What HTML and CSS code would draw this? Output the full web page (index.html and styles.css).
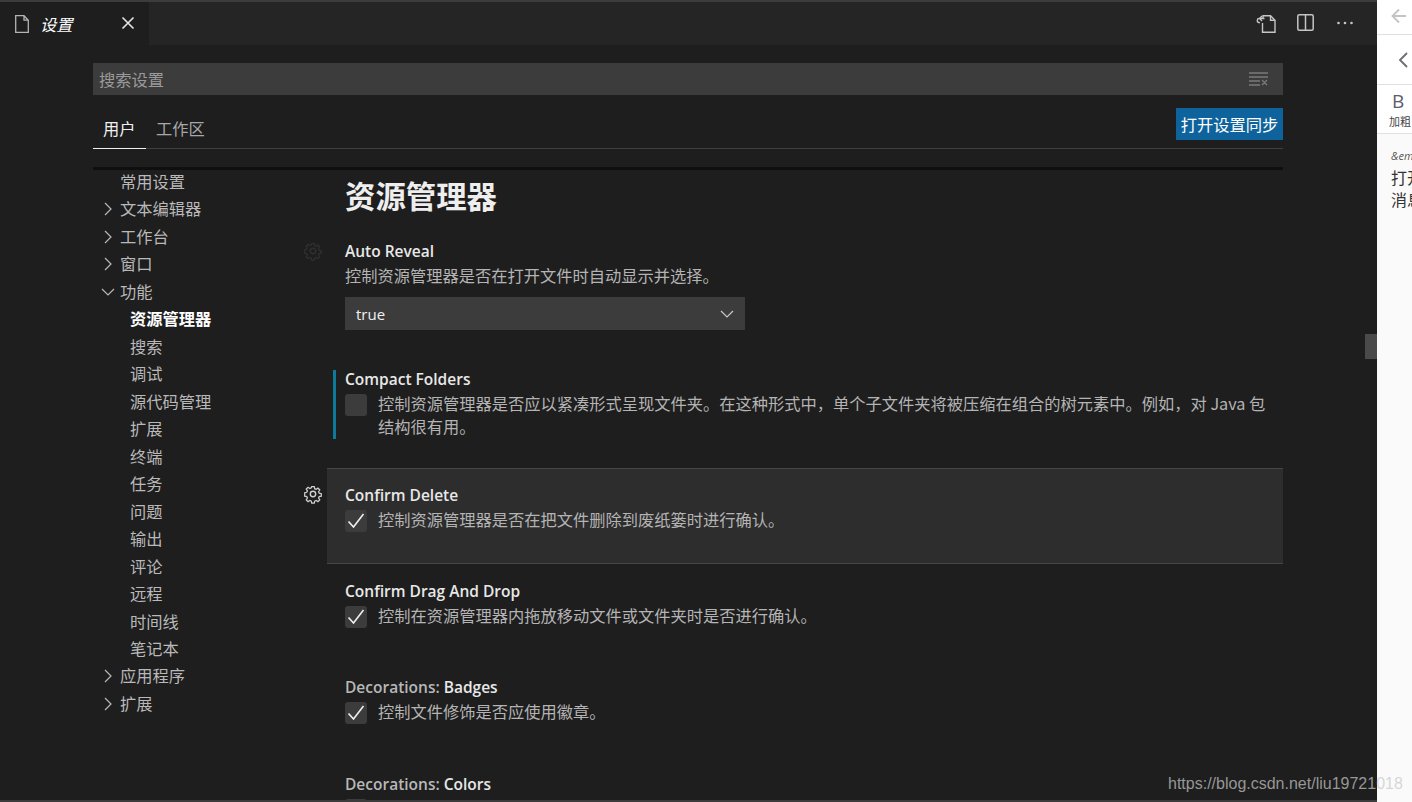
FILE: index.html
```html
<!DOCTYPE html>
<html lang="zh-CN">
<head>
<meta charset="utf-8">
<title>设置</title>
<link rel="stylesheet" href="styles.css">
</head>
<body>
<div class="app">
  <main class="editor">
    <header class="tabbar">
      <div class="tab">
        <svg class="file-icon" viewBox="0 0 14 18" width="14" height="18"><path d="M.7.7h8.300l4.300 4.500v12.100H.7z M9 .7v4.500h4.300" fill="none" stroke="#b4b4b4" stroke-width="1.300"/></svg>
        <span class="tab-title">设置</span>
        <svg class="close-icon" viewBox="0 0 14 14" width="14" height="14"><path d="M1.500 1.500l11 11M12.500 1.500l-11 11" stroke="#e6e6e6" stroke-width="1.600" fill="none"/></svg>
      </div>
      <div class="tab-actions">
        <svg class="act-open" viewBox="0 0 20 18" width="20" height="18"><path d="M7 3V.7h7.500l4.500 4.500v12.100H6.500V8" fill="none" stroke="#c5c5c5" stroke-width="1.400"/><path d="M14.500.7v4.500H19" fill="none" stroke="#c5c5c5" stroke-width="1.400"/><path d="M8.500 3.500H3.500a2 2 0 0 0 -.5 4l1 .5M6 1L3.500 3.500 6 6" fill="none" stroke="#c5c5c5" stroke-width="1.300"/></svg>
        <svg viewBox="0 0 17 17" width="17" height="17"><rect x=".8" y=".8" width="15.400" height="15.400" rx="1.500" fill="none" stroke="#c5c5c5" stroke-width="1.500"/><path d="M8.500 1v15" stroke="#c5c5c5" stroke-width="1.500"/></svg>
        <svg class="act-more" viewBox="0 0 16 4" width="16" height="4"><circle cx="1.500" cy="2" r="1.300" fill="#c5c5c5"/><circle cx="8" cy="2" r="1.300" fill="#c5c5c5"/><circle cx="14.500" cy="2" r="1.300" fill="#c5c5c5"/></svg>
      </div>
    </header>

    <section class="settings">
      <div class="search">
        <span class="search-text">搜索设置</span>
        <svg viewBox="0 0 19 14" width="19" height="14"><path d="M0 1h19M0 5h19M0 9h11M0 13h11M13 8l5 5M18 8l-5 5" stroke="#7a7a7a" stroke-width="1.300" fill="none"/></svg>
      </div>
      <div class="scope-bar">
        <div class="scope-tabs">
          <span class="scope active">用户</span>
          <span class="scope">工作区</span>
        </div>
        <button class="sync">打开设置同步</button>
      </div>
      <div class="shadow-line"></div>

      <div class="body">
        <nav class="toc">
          <div class="toc-row"><span class="text">常用设置</span></div>
          <div class="toc-row"><svg class="tw" viewBox="0 0 14 14" width="14" height="14"><path d="M4 1l6 6-6 6" fill="none" stroke="#b8b8b8" stroke-width="1.200"/></svg><span class="text">文本编辑器</span></div>
          <div class="toc-row"><svg class="tw" viewBox="0 0 14 14" width="14" height="14"><path d="M4 1l6 6-6 6" fill="none" stroke="#b8b8b8" stroke-width="1.200"/></svg><span class="text">工作台</span></div>
          <div class="toc-row"><svg class="tw" viewBox="0 0 14 14" width="14" height="14"><path d="M4 1l6 6-6 6" fill="none" stroke="#b8b8b8" stroke-width="1.200"/></svg><span class="text">窗口</span></div>
          <div class="toc-row"><svg class="tw" viewBox="0 0 14 14" width="14" height="14"><path d="M1 4l6 6 6-6" fill="none" stroke="#b8b8b8" stroke-width="1.200"/></svg><span class="text">功能</span></div>
          <div class="toc-row child current"><span class="text">资源管理器</span></div>
          <div class="toc-row child"><span class="text">搜索</span></div>
          <div class="toc-row child"><span class="text">调试</span></div>
          <div class="toc-row child"><span class="text">源代码管理</span></div>
          <div class="toc-row child"><span class="text">扩展</span></div>
          <div class="toc-row child"><span class="text">终端</span></div>
          <div class="toc-row child"><span class="text">任务</span></div>
          <div class="toc-row child"><span class="text">问题</span></div>
          <div class="toc-row child"><span class="text">输出</span></div>
          <div class="toc-row child"><span class="text">评论</span></div>
          <div class="toc-row child"><span class="text">远程</span></div>
          <div class="toc-row child"><span class="text">时间线</span></div>
          <div class="toc-row child"><span class="text">笔记本</span></div>
          <div class="toc-row"><svg class="tw" viewBox="0 0 14 14" width="14" height="14"><path d="M4 1l6 6-6 6" fill="none" stroke="#b8b8b8" stroke-width="1.200"/></svg><span class="text">应用程序</span></div>
          <div class="toc-row"><svg class="tw" viewBox="0 0 14 14" width="14" height="14"><path d="M4 1l6 6-6 6" fill="none" stroke="#b8b8b8" stroke-width="1.200"/></svg><span class="text">扩展</span></div>
        </nav>

        <div class="list">
          <h2 class="group-title">资源管理器</h2>

          <article class="item first">
            <svg class="gear dim" viewBox="0 0 20 20" width="20" height="20"><use href="#gear"/></svg>
            <div class="label"><b>Auto Reveal</b></div>
            <div class="desc">控制资源管理器是否在打开文件时自动显示并选择。</div>
            <div class="select"><span>true</span><svg viewBox="0 0 14 14" width="14" height="14"><path d="M1 4l6 6 6-6" fill="none" stroke="#c8c8c8" stroke-width="1.200"/></svg></div>
          </article>

          <article class="item compact">
            <div class="label"><b>Compact Folders</b></div>
            <div class="check-row">
              <span class="checkbox"></span>
              <div class="desc">控制资源管理器是否应以紧凑形式呈现文件夹。在这种形式中，单个子文件夹将被压缩在组合的树元素中。例如，对 Java 包结构很有用。</div>
            </div>
          </article>

          <article class="item hovered">
            <svg class="gear" viewBox="0 0 20 20" width="20" height="20"><use href="#gear"/></svg>
            <div class="label"><b>Confirm Delete</b></div>
            <div class="check-row">
              <span class="checkbox"><svg viewBox="0 0 22 22" width="22" height="22"><path d="M3.500 11.500l5 5.500L18.500 4" fill="none" stroke="#f0f0f0" stroke-width="1.600"/></svg></span>
              <div class="desc">控制资源管理器是否在把文件删除到废纸篓时进行确认。</div>
            </div>
          </article>

          <article class="item">
            <div class="label"><b>Confirm Drag And Drop</b></div>
            <div class="check-row">
              <span class="checkbox"><svg viewBox="0 0 22 22" width="22" height="22"><path d="M3.500 11.500l5 5.500L18.500 4" fill="none" stroke="#f0f0f0" stroke-width="1.600"/></svg></span>
              <div class="desc">控制在资源管理器内拖放移动文件或文件夹时是否进行确认。</div>
            </div>
          </article>

          <article class="item">
            <div class="label"><span class="cat">Decorations:</span> <b>Badges</b></div>
            <div class="check-row">
              <span class="checkbox"><svg viewBox="0 0 22 22" width="22" height="22"><path d="M3.500 11.500l5 5.500L18.500 4" fill="none" stroke="#f0f0f0" stroke-width="1.600"/></svg></span>
              <div class="desc">控制文件修饰是否应使用徽章。</div>
            </div>
          </article>

          <article class="item">
            <div class="label"><span class="cat">Decorations:</span> <b>Colors</b></div>
            <div class="check-row">
              <span class="checkbox"></span>
            </div>
          </article>
        </div>
      </div>
    </section>
    <div class="scroll-thumb"></div>
    <div class="bottom-line"></div>
  </main>

  <aside class="side">
    <div class="side-top"><svg viewBox="0 0 20 20" width="20" height="20"><path d="M17 10H4M10 3.500L3.500 10l6.500 6.500" fill="none" stroke="#c4c4c4" stroke-width="1.800"/></svg></div>
    <div class="side-back"><svg viewBox="0 0 14 18" width="14" height="18"><path d="M10 2L3 9l7 7" fill="none" stroke="#6a6a72" stroke-width="1.800"/></svg></div>
    <div class="side-tool"><span class="b">B</span><span class="small">加粗</span></div>
    <div class="side-text">
      <div class="em">&amp;emsp;</div>
      <div>打开</div>
      <div>消息</div>
    </div>
  </aside>
</div>
<div class="watermark">https://blog.csdn.net/liu19721018</div>
<svg class="defs" width="0" height="0"><defs>
  <g id="gear"><path fill="none" stroke="currentColor" stroke-width="1.400" d="M8.600 1.800h2.800l.5 2.300 1.600.7 2-1.300 2 2-1.300 2 .7 1.600 2.300.5v2.800l-2.300.5-.7 1.600 1.300 2-2 2-2-1.300-1.600.7-.5 2.300H8.600l-.5-2.300-1.600-.7-2 1.300-2-2 1.300-2-.7-1.600-2.300-.5V8.600l2.300-.5.700-1.600-1.300-2 2-2 2 1.300 1.600-.7z" transform="translate(1 1) scale(.9)"/><circle cx="10" cy="10" r="2.700" fill="none" stroke="currentColor" stroke-width="1.400"/></g>
</defs></svg>
</body>
</html>
```
FILE: styles.css
```css
* { box-sizing: border-box; }
html, body { margin: 0; height: 100%; overflow: hidden; }
body {
  background: #1e1e1e;
  color: #cccccc;
  font-family: "Open Sans", "Noto Sans CJK SC", sans-serif;
  font-size: 16.25px;
}
.app { display: flex; width: 1412px; height: 802px; }
.editor { position: relative; width: 1377px; height: 802px; background: #1e1e1e; overflow: hidden; flex: none; }

.tabbar { display: flex; justify-content: space-between; height: 45px; background: #252526; border-top: 2px solid #3c3c3c; }
.tab { display: flex; align-items: center; width: 149px; background: #1e1e1e; padding-left: 15px; }
.file-icon { flex: none; }
.tab-title { margin-left: 11px; width: 81px; color: #fff; font-style: italic; font-size: 16.25px; line-height: 20px; margin-top: 1px; font-family: "Noto Sans CJK SC", sans-serif; }
.close-icon { flex: none; margin-top: -1px; }
.tab-actions { display: flex; align-items: center; gap: 21px; padding-right: 24px; margin-top: -2px; }
.act-open { margin-top: 2px; }
.act-more { margin-left: 2px; }

.settings { padding: 18px 94px 0 93px; }
.search { display: flex; justify-content: space-between; align-items: center; height: 32px; background: #3c3c3c; padding: 0 15px 0 6px; }
.search-text { color: #9a9a9a; font-family: "Noto Sans CJK SC", sans-serif; }
.scope-bar { display: flex; justify-content: space-between; align-items: flex-start; height: 41px; margin-top: 13px; border-bottom: 1px solid #3f3f3f; }
.scope-tabs { display: flex; height: 41px; padding-top: 8px; }
.scope { display: block; height: 33px; line-height: 24px; padding: 0 10px; color: #a8a8a8; font-family: "Noto Sans CJK SC", sans-serif; }
.scope.active { color: #f0f0f0; border-bottom: 1px solid #f0f0f0; width: 53px; }
.sync { height: 32px; width: 107px; padding: 0; border: 0; background: #0e639c; color: #fff; font: 16.25px "Noto Sans CJK SC", sans-serif; }
.shadow-line { height: 3px; margin-top: 18px; background: #0f0f0f; }

.body { display: flex; }
.toc { width: 234px; flex: none; margin-top: -2px; }
.toc-row { position: relative; height: 27.47px; line-height: 27.47px; padding-left: 27px; color: #b9b9b9; white-space: nowrap; font-family: "Noto Sans CJK SC", sans-serif; }
.toc-row.child { padding-left: 37px; }
.toc-row.current { color: #fff; font-weight: 700; }
.tw { position: absolute; left: 8px; top: 7px; }

.list { flex: 1; min-width: 0; }
.group-title { margin: 0; padding: 3px 0 0 18px; font: 700 30.4px/44px "Noto Sans CJK SC", sans-serif; color: #eeeeee; height: 49px; }
.item { position: relative; padding: 16px 14px 0 18px; height: 96.3px; }
.item.first { height: 143px; padding-top: 11px; margin-top: 10px; }
.item.first .desc { margin-top: 1px; }
.item.compact { height: 100px; padding-top: 0; }
.item.compact .label { margin-top: -4px; }
.item.compact .check-row .desc { line-height: 23px; margin-top: -2px; }
.item.compact::before { content: ""; position: absolute; left: 6px; top: 2px; height: 69px; width: 3px; background: #0b7a9b; }
.item.hovered { height: 96px; padding-top: 15px; background: #2d2d2d; border-top: 1px solid #454545; border-bottom: 1px solid #454545; }
.label { font-size: 15.5px; line-height: 22px; color: #e8e8e8; white-space: nowrap; }
.label b { font-weight: 600; }
.cat { color: #b8b8b8; font-weight: 600; }
.desc { line-height: 24px; color: #b4b4b4; font-family: "Noto Sans CJK SC", sans-serif; }
.select { display: flex; justify-content: space-between; align-items: center; width: 400px; height: 33px; margin-top: 10px; background: #3c3c3c; color: #f0f0f0; padding: 0 11px; font-size: 15px; }
.check-row { display: flex; align-items: flex-start; gap: 11px; margin-top: 4px; }
.check-row .desc { margin-top: -3px; }
.checkbox { display: block; flex: none; width: 22px; height: 22px; background: #3c3c3c; border-radius: 3px; }
.checkbox svg { display: block; }
.gear { position: absolute; left: -24px; top: 12px; color: #d0d0d0; }
.hovered .gear { top: 15px; }
.gear.dim { color: #303030; }

.scroll-thumb { position: absolute; left: 1365px; top: 334px; width: 12px; height: 25px; background: #4a4a4a; }
.bottom-line { position: absolute; left: 0; bottom: 0; width: 100%; height: 2px; background: #3c3c3c; }

.side { width: 35px; flex: none; background: #f5f5f5; color: #333; overflow: hidden; font-family: "Noto Sans CJK SC", sans-serif; }
.side-top { height: 35px; background: #fff; border-bottom: 1px solid #e0e0e0; padding: 6px 0 0 12px; }
.side-back { height: 50px; background: #fff; border-bottom: 1px solid #e0e0e0; padding: 15px 0 0 20px; }
.side-tool { height: 49px; background: #fff; border-bottom: 1px solid #e0e0e0; display: flex; flex-direction: column; padding: 4px 0 0 12px; white-space: nowrap; }
.side-tool .b { font: 19px/24px "Open Sans", sans-serif; color: #5c5c6c; height: 22px; margin-left: 3px; }
.side-tool .small { font-size: 11px; line-height: 16px; margin-top: 2px; color: #444; }
.side-text { padding: 12px 0 0 14px; white-space: nowrap; font-size: 16px; line-height: 22px; background: #fafafa; height: 100%; }
.side-text .em { font-style: italic; font-size: 11px; line-height: 20px; color: #555; font-family: "Open Sans", sans-serif; }
.watermark { position: absolute; left: 1168px; top: 775px; color: rgba(200,200,200,.72); font: 16px/18px "Liberation Sans", sans-serif; white-space: nowrap; }
.defs { position: absolute; }
```
